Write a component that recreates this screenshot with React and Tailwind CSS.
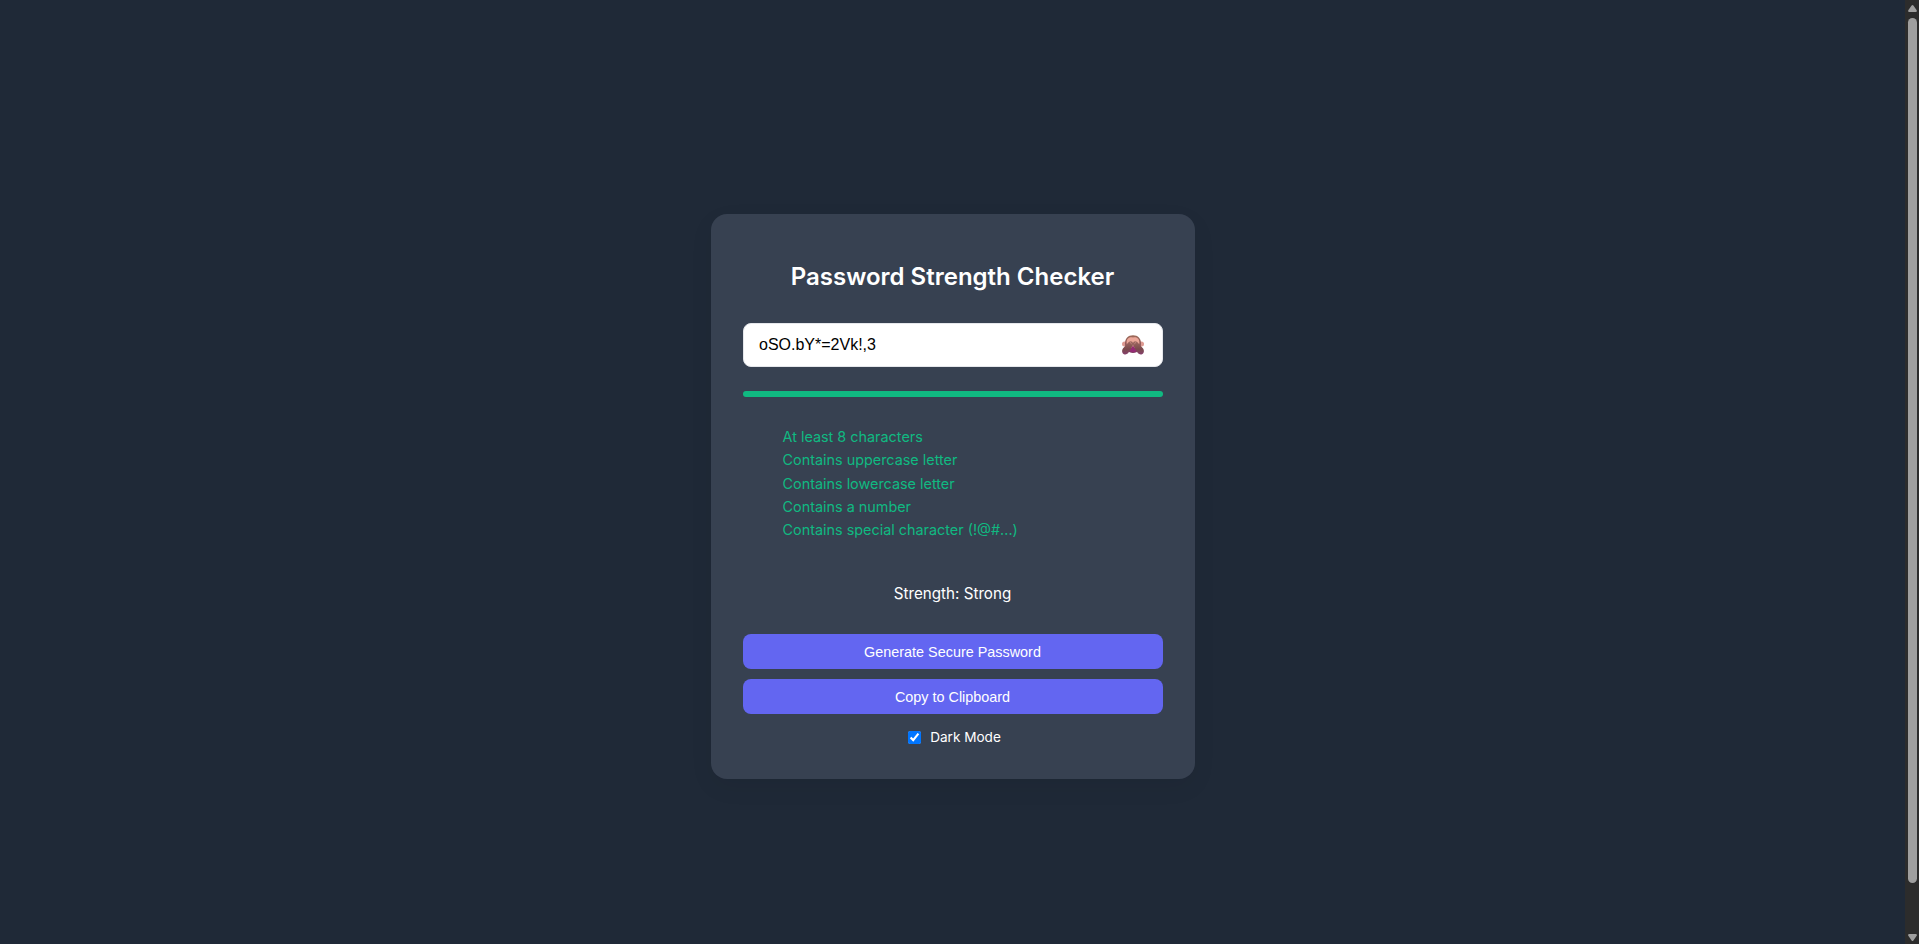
import React from "react";

const rules = [
  "At least 8 characters",
  "Contains uppercase letter",
  "Contains lowercase letter",
  "Contains a number",
  "Contains special character (!@#...)",
];

function MonkeyIcon() {
  return (
    <svg viewBox="0 0 22 20" className="h-5 w-[22px]" aria-hidden="true">
      <defs>
        <linearGradient id="fur" x1="0" y1="0" x2="0" y2="1">
          <stop offset="0" stopColor="#9c6a58" />
          <stop offset="0.6" stopColor="#8d5458" />
          <stop offset="1" stopColor="#7d3560" />
        </linearGradient>
        <linearGradient id="arm" x1="0" y1="0" x2="0" y2="1">
          <stop offset="0" stopColor="#a06a62" />
          <stop offset="0.6" stopColor="#7a4a4c" />
          <stop offset="1" stopColor="#85406c" />
        </linearGradient>
      </defs>
      <circle cx="2.5" cy="9" r="2.500" fill="#dd9a92" />
      <circle cx="19.5" cy="9" r="2.500" fill="#dd9a92" />
      <path d="M11 .3C6 .3 3 3.500 3 8.500c0 5 3 9.500 8 9.500s8-4.500 8-9.500C19 3.500 16 .3 11 .3z" fill="url(#fur)" />
      <path d="M11 2.600C8.500 1.600 4.600 2.600 4.600 7.500c0 2 .8 3.500 1.400 5h10c.6-1.500 1.400-3 1.400-5 0-4.900-3.900-5.900-6.400-4.900z" fill="#eba698" />
      <path d="M11 10.500l3.500 5.500c-1.500 1.300-5.500 1.300-7 0z" fill="#952a75" />
      <path d="M10.300 6.800c-1-.9-2.600-.8-3.800.5L.9 13.600c-1.300 1.600-1.100 4.900 1.100 5.600 2 .6 3.700-.4 4.700-2l4-6.700c.6-1.200.5-2.900-.4-3.700z" fill="url(#arm)" />
      <path d="M11.700 6.800c1-.9 2.600-.8 3.800.5l5.600 6.300c1.300 1.600 1.100 4.900-1.100 5.600-2 .6-3.700-.4-4.700-2l-4-6.700c-.6-1.200-.5-2.900.4-3.700z" fill="url(#arm)" />
      <path d="M8.200 7.200l1.300 1.800M13.800 7.200l-1.300 1.800" stroke="#c78a80" strokeWidth="0.8" strokeLinecap="round" />
    </svg>
  );
}

function Scrollbar() {
  return (
    <div className="flex w-[14px] flex-col items-center bg-[#2c2c2c]">
      <svg viewBox="0 0 9 7" className="mt-[5px] h-[7px] w-[9px]" aria-hidden="true">
        <path d="M3.600.6q.9-1 1.800 0l3.300 4.600q.6 1.800-.9 1.800H1.200Q-.3 7 .3 5.200z" fill="#9f9f9f" />
      </svg>
      <div className="mt-[6px] h-[865px] w-[9px] rounded-full bg-[#9f9f9f]" />
      <svg viewBox="0 0 9 7" className="mt-auto mb-[3px] h-[7px] w-[9px]" aria-hidden="true">
        <path d="M3.600 6.400q.9 1 1.800 0l3.300-4.600Q9.300 0 7.800 0H1.200Q-.3 0 .3 1.800z" fill="#9f9f9f" />
      </svg>
    </div>
  );
}

export default function App() {
  return (
    <div className="flex h-screen overflow-hidden bg-[#1f2937] font-['Inter',sans-serif] text-white">
      <main className="flex flex-1 justify-center pt-[214px]">
        <section className="flex h-[565px] w-[484px] flex-col rounded-2xl bg-[#374151] px-8 shadow-[0_8px_24px_rgba(0,0,0,0.06)]">
          <h1 className="mt-[48px] text-center text-2xl leading-[29px] font-semibold">
            Password Strength Checker
          </h1>
          <div className="mt-[32px] flex h-[44px] items-center justify-between rounded-lg border border-[#e5e7eb] bg-white pr-[18px] pl-[15.5px] font-['Liberation_Sans',sans-serif] text-base text-black">
            <span>oSO.bY*=2Vk!,3</span>
            <MonkeyIcon />
          </div>
          <div className="mt-6 h-[6px] rounded-[4px] bg-[#10b981]" />
          <ul className="mt-[28px] pl-10 text-[14.4px] leading-[23.3px] text-[#10b981]">
            {rules.map((rule) => (
              <li key={rule}>{rule}</li>
            ))}
          </ul>
          <p className="mt-[42.5px] text-center text-[15.2px] leading-5">Strength: Strong</p>
          <button className="mt-[30.5px] h-[35px] shrink-0 rounded-lg bg-[#6366f1] pt-[2px] font-['Liberation_Sans',sans-serif] text-[14.4px]">
            Generate Secure Password
          </button>
          <button className="mt-[10px] h-[35px] shrink-0 rounded-lg bg-[#6366f1] pt-[2px] font-['Liberation_Sans',sans-serif] text-[14.4px]">
            Copy to Clipboard
          </button>
          <label className="mt-[14px] flex items-center justify-center pl-1 text-[13.6px] leading-[18px]">
            <input type="checkbox" defaultChecked className="mr-[9px] size-[13px]" />
            Dark Mode
          </label>
        </section>
      </main>
      <Scrollbar />
    </div>
  );
}
